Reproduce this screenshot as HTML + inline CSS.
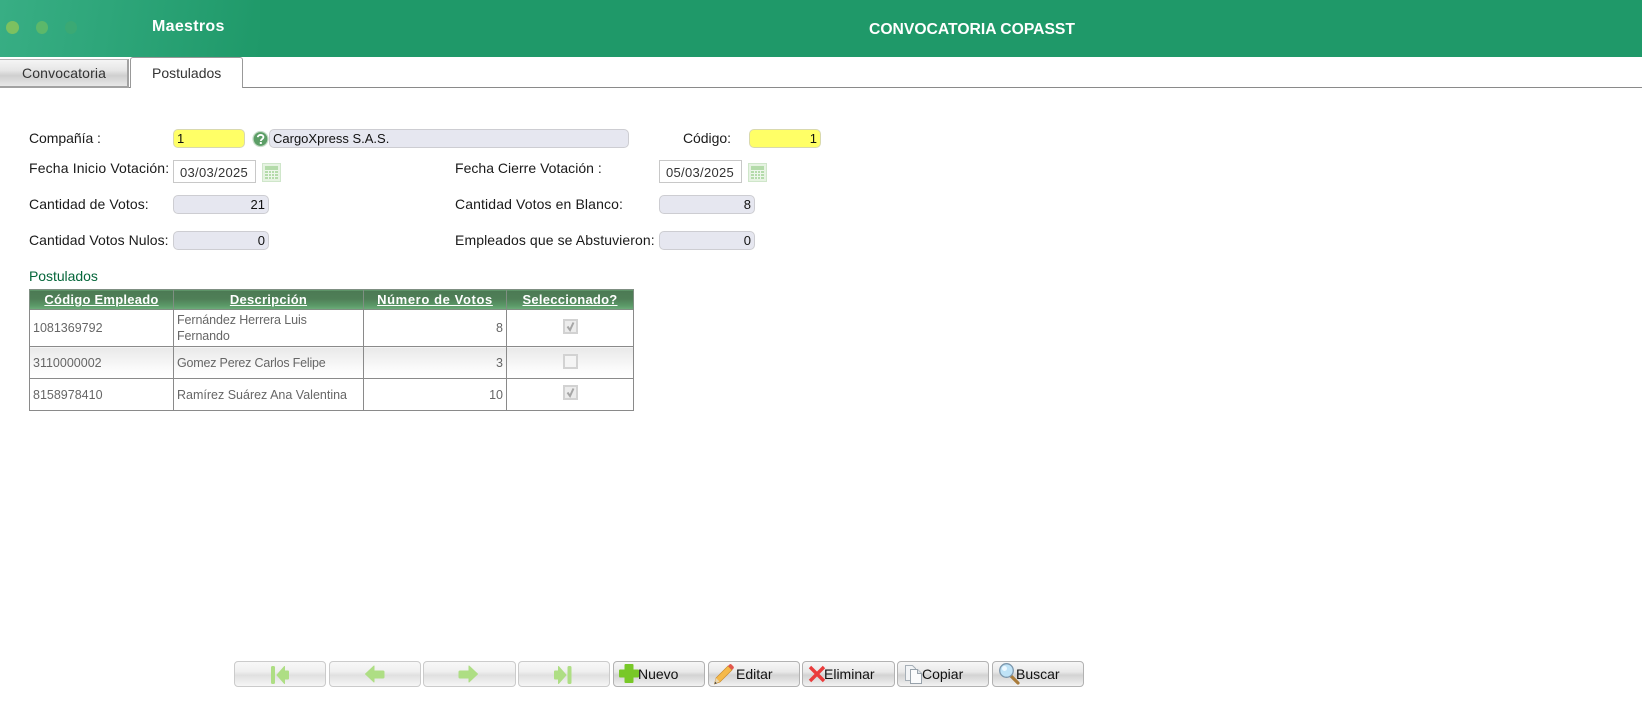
<!DOCTYPE html>
<html lang="es"><head><meta charset="utf-8"><title>Convocatoria COPASST</title>
<style>
html,body{margin:0;padding:0;background:#fff}
body{position:relative;width:1642px;height:705px;overflow:hidden;font-family:"Liberation Sans",sans-serif;font-size:14px;color:#111}
.a{position:absolute;white-space:nowrap}
.l{position:absolute;white-space:nowrap;height:20px;line-height:20px;font-size:14px;letter-spacing:.08px;color:#1a1a1a}
.i{position:absolute;box-sizing:border-box;border:1px solid #cdcdd2;border-radius:5px;background:#e6e7f0;height:19px;line-height:17px;font-size:13px;padding:0 3px;color:#111;white-space:nowrap}
.y{background:#ffff66;border-color:#d9d9ae}
.r{text-align:right}
.d{position:absolute;box-sizing:border-box;border:1px solid #c8c8c8;background:#fff;height:23px;width:83px;line-height:23px;font-size:13px;letter-spacing:.3px;color:#333;padding-left:6px;white-space:nowrap}
.b{position:absolute;top:661px;height:26px;box-sizing:border-box;border:1px solid #cbcbcb;border-radius:4px;background:linear-gradient(#f8f8f8 0,#efefef 40%,#e0e0e0 55%,#efefef 85%,#f6f6f6 100%);font-size:14px;line-height:26px;color:#111;white-space:nowrap}
.b.on{border-color:#b2b2b2;background:linear-gradient(#f7f7f7 0,#e9e9e9 40%,#d3d3d3 55%,#e8e8e8 85%,#f3f3f3 100%)}
.b svg{position:absolute}
.b span{position:absolute;top:-1px;letter-spacing:0}
table{position:absolute;left:29px;top:289px;width:604px;height:122px;border-collapse:collapse;table-layout:fixed;font-size:12.5px;color:#666}
th,td{border:1px solid #8a8a8a;padding:0 3px}
th{height:19px;padding:0;background:linear-gradient(#4c7a54 0,#4f7f57 45%,#5b9a68 80%,#6fae7c 100%);color:#fff;font-size:13px;letter-spacing:.25px;text-decoration:underline;line-height:17px;border-color:#7f8f82}
td{line-height:16px}
.g td{background:linear-gradient(#e9e9e9,#fbfbfb 70%,#fff)}
.c{position:absolute;box-sizing:border-box;width:15px;height:15px;border:2px solid #d2d2d2;background:#ececec}
</style></head><body>

<div class="a" style="left:0;top:0;width:1642px;height:57px;background:#1f9969"></div>
<div class="a" style="left:0;top:0;width:260px;height:57px;background:linear-gradient(100deg,#38ae84 0,#2ea67a 40%,#1f9969 100%)"></div>
<div class="a" style="left:6px;top:21px;width:13px;height:13px;border-radius:50%;background:#7cc160"></div>
<div class="a" style="left:36px;top:21px;width:12px;height:13px;border-radius:50%;background:#5cb86a"></div>
<div class="a" style="left:65px;top:21px;width:12px;height:13px;border-radius:50%;background:#3ba974"></div>
<div class="a" style="left:152px;top:17px;line-height:20px;font-size:16px;letter-spacing:.3px;font-weight:bold;color:#fff">Maestros</div>
<div class="a" style="left:869px;top:20px;line-height:20px;font-size:15.7px;font-weight:bold;color:#fff">CONVOCATORIA COPASST</div>

<div class="a" style="left:0;top:87px;width:1642px;height:1px;background:#8a8a8a"></div>
<div class="a" style="left:0;top:59px;width:129px;height:29px;box-sizing:border-box;border:2px solid #a2a2a2;border-left:0;border-top:1px solid #b4b4b4;background:linear-gradient(#f5f5f5,#e6e6e6 40%,#cfcfcf 60%,#e8e8e8)"></div>
<div class="a" style="left:22px;top:63px;line-height:20px;font-size:14px;letter-spacing:.13px;color:#333">Convocatoria</div>
<div class="a" style="left:130px;top:57px;width:113px;height:31px;box-sizing:border-box;border:1px solid #999;border-bottom:0;border-radius:3px 3px 0 0;background:#fff"></div>
<div class="a" style="left:152px;top:63px;line-height:20px;font-size:14px;color:#333">Postulados</div>

<div class="l" style="left:29px;top:128px;letter-spacing:-.05px">Compañía :</div>
<div class="i y" style="left:173px;top:129px;width:72px">1</div>
<svg class="a" style="left:252px;top:130px" width="17" height="18" viewBox="0 0 17 18"><circle cx="8.5" cy="9" r="7.5" fill="#5c9e66"/><circle cx="8.5" cy="9" r="7.5" fill="none" stroke="#c6dcc8" stroke-width="1.2"/><path d="M5.8 7.2c.2-3 5.6-3 5.6 0 0 2-2.600 1.800-2.600 3.800" fill="none" stroke="#fff" stroke-width="1.8"/><rect x="7.8" y="12" width="2" height="2" fill="#fff"/></svg>
<div class="i" style="left:269px;top:129px;width:360px">CargoXpress S.A.S.</div>
<div class="l" style="left:683px;top:128px;letter-spacing:-.05px">Código:</div>
<div class="i y r" style="left:749px;top:129px;width:72px">1</div>

<div class="l" style="left:29px;top:158px;letter-spacing:.15px">Fecha Inicio Votación:</div>
<div class="d" style="left:173px;top:160px">03/03/2025</div>
<svg class="a" style="left:262px;top:163px" width="19" height="19" viewBox="0 0 19 19"><rect x=".5" y=".5" width="18" height="18" fill="#e6f3e2" stroke="#cfe6ca"/><rect x="3" y="3" width="13" height="13" fill="#b4dbaa"/><path d="M3 7.5h13M3 10.500h13M3 13.500h13M6.500 7v9M9.500 7v9M12.500 7v9" stroke="#eef7ec" stroke-width="1"/></svg>
<div class="l" style="left:455px;top:158px;letter-spacing:.02px">Fecha Cierre Votación :</div>
<div class="d" style="left:659px;top:160px">05/03/2025</div>
<svg class="a" style="left:748px;top:163px" width="19" height="19" viewBox="0 0 19 19"><rect x=".5" y=".5" width="18" height="18" fill="#e6f3e2" stroke="#cfe6ca"/><rect x="3" y="3" width="13" height="13" fill="#b4dbaa"/><path d="M3 7.5h13M3 10.500h13M3 13.500h13M6.500 7v9M9.500 7v9M12.500 7v9" stroke="#eef7ec" stroke-width="1"/></svg>

<div class="l" style="left:29px;top:194px">Cantidad de Votos:</div>
<div class="i r" style="left:173px;top:195px;width:96px">21</div>
<div class="l" style="left:455px;top:194px;letter-spacing:.12px">Cantidad Votos en Blanco:</div>
<div class="i r" style="left:659px;top:195px;width:96px">8</div>
<div class="l" style="left:29px;top:230px;letter-spacing:.05px">Cantidad Votos Nulos:</div>
<div class="i r" style="left:173px;top:231px;width:96px">0</div>
<div class="l" style="left:455px;top:230px;letter-spacing:.1px">Empleados que se Abstuvieron:</div>
<div class="i r" style="left:659px;top:231px;width:96px">0</div>

<div class="l" style="left:29px;top:266px;color:#05663a;letter-spacing:-.05px">Postulados</div>

<table>
<colgroup><col style="width:144px"><col style="width:190px"><col style="width:143px"><col style="width:127px"></colgroup>
<tr><th>Código Empleado</th><th>Descripción</th><th style="letter-spacing:.6px">Número de Votos</th><th>Seleccionado?</th></tr>
<tr style="height:37px"><td>1081369792</td><td style="letter-spacing:-.1px">Fernández Herrera Luis Fernando</td><td style="text-align:right">8</td><td></td></tr>
<tr class="g" style="height:32px"><td>3110000002</td><td style="letter-spacing:-.2px">Gomez Perez Carlos Felipe</td><td style="text-align:right">3</td><td></td></tr>
<tr style="height:32px"><td>8158978410</td><td>Ramírez Suárez Ana Valentina</td><td style="text-align:right">10</td><td></td></tr>
</table>
<div class="c" style="left:563px;top:319px"></div>
<svg class="a" style="left:563px;top:319px" width="15" height="15" viewBox="0 0 15 15"><path d="M4.500 7.500l2.500 3.500L10.500 3.500" fill="none" stroke="#a6a6a6" stroke-width="2"/></svg>
<div class="c" style="left:563px;top:354px;background:#f4f4f4"></div>
<div class="c" style="left:563px;top:385px"></div>
<svg class="a" style="left:563px;top:385px" width="15" height="15" viewBox="0 0 15 15"><path d="M4.500 7.500l2.500 3.500L10.500 3.500" fill="none" stroke="#a6a6a6" stroke-width="2"/></svg>

<div class="b" style="left:234px;width:92px"><svg style="left:36px;top:2px" width="20" height="20" viewBox="0 0 20 20"><rect x="0" y="2" width="4" height="18" rx="1.500" fill="#aede84"/><path d="M6 11L13.500 2.500V19.500z" fill="#aede84" stroke="#aede84" stroke-linejoin="round"/><rect x="13" y="6.500" width="5" height="9" rx="1" fill="#aede84"/></svg></div>
<div class="b" style="left:329px;width:92px"><svg style="left:34px;top:1px" width="22" height="22" viewBox="0 0 22 22"><path d="M1.500 11L10 3v5h9a1 1 0 0 1 1 1v5a1 1 0 0 1-1 1h-9v4z" fill="#aede84" stroke="#aede84" stroke-linejoin="round"/></svg></div>
<div class="b" style="left:423px;width:93px"><svg style="left:33px;top:1px" width="22" height="22" viewBox="0 0 22 22"><path d="M20.500 11L12 3v5H3a1 1 0 0 0-1 1v5a1 1 0 0 0 1 1h9v4z" fill="#aede84" stroke="#aede84" stroke-linejoin="round"/></svg></div>
<div class="b" style="left:518px;width:92px"><svg style="left:35px;top:2px" width="20" height="20" viewBox="0 0 20 20"><rect x="0" y="6.500" width="5" height="9" rx="1" fill="#aede84"/><path d="M12 11L4.500 2.500V19.500z" fill="#aede84" stroke="#aede84" stroke-linejoin="round"/><rect x="13.500" y="2" width="4" height="18" rx="1.500" fill="#aede84"/></svg></div>

<div class="b on" style="left:613px;width:92px"><svg style="left:5px;top:1px" width="20" height="21" viewBox="0 0 20 21"><path d="M6.500 1h7a1 1 0 0 1 1 1v4.500H19a1 1 0 0 1 1 1v6a1 1 0 0 1-1 1h-4.500V19a1 1 0 0 1-1 1h-7a1 1 0 0 1-1-1v-4.500H1a1 1 0 0 1-1-1v-6a1 1 0 0 1 1-1h4.500V2a1 1 0 0 1 1-1z" fill="#78c828"/></svg><span style="left:24px">Nuevo</span></div>
<div class="b on" style="left:708px;width:92px"><svg style="left:4px;top:1px" width="22" height="22" viewBox="0 0 22 22"><path d="M1.500 21l1.500-6L15 3l4 4L7 19z" fill="#f5b94a" stroke="#c98a2c" stroke-width=".7"/><path d="M1.500 21l1.500-6 3.500 3.500z" fill="#e9d7b0"/><path d="M1.500 21l.6-2.400 1.800 1.800z" fill="#444"/><path d="M15 3l1.500-1.500a1.500 1.500 0 0 1 2 0l2 2a1.500 1.500 0 0 1 0 2L19 7z" fill="#e2574c"/></svg><span style="left:27px">Editar</span></div>
<div class="b on" style="left:802px;width:93px"><svg style="left:5px;top:3px" width="18" height="18" viewBox="0 0 18 18"><path d="M2 2l14 14M16 2L2 16" stroke="#ea3c3c" stroke-width="3.400" fill="none"/></svg><span style="left:21px">Eliminar</span></div>
<div class="b on" style="left:897px;width:92px"><svg style="left:6px;top:2px" width="19" height="21" viewBox="0 0 19 21"><path d="M1.500 1.500h7l3 3v12h-10z" fill="#f2f4f6" stroke="#a6afb7"/><path d="M6.500 5.500h7l4 4v10h-11z" fill="#fafbfc" stroke="#98a2ab"/><path d="M13.500 5.500v4h4" fill="#dde3e8" stroke="#98a2ab"/></svg><span style="left:24px">Copiar</span></div>
<div class="b on" style="left:992px;width:92px"><svg style="left:5px;top:0" width="22" height="23" viewBox="0 0 22 23"><path d="M13 14l7 7" stroke="#a97b3a" stroke-width="3.200" stroke-linecap="round"/><circle cx="8.500" cy="8.500" r="6.800" fill="#bfe3f7" stroke="#7d97ac" stroke-width="1.300"/><circle cx="6.500" cy="6.500" r="2.500" fill="#eef9ff"/></svg><span style="left:23px">Buscar</span></div>

</body></html>
